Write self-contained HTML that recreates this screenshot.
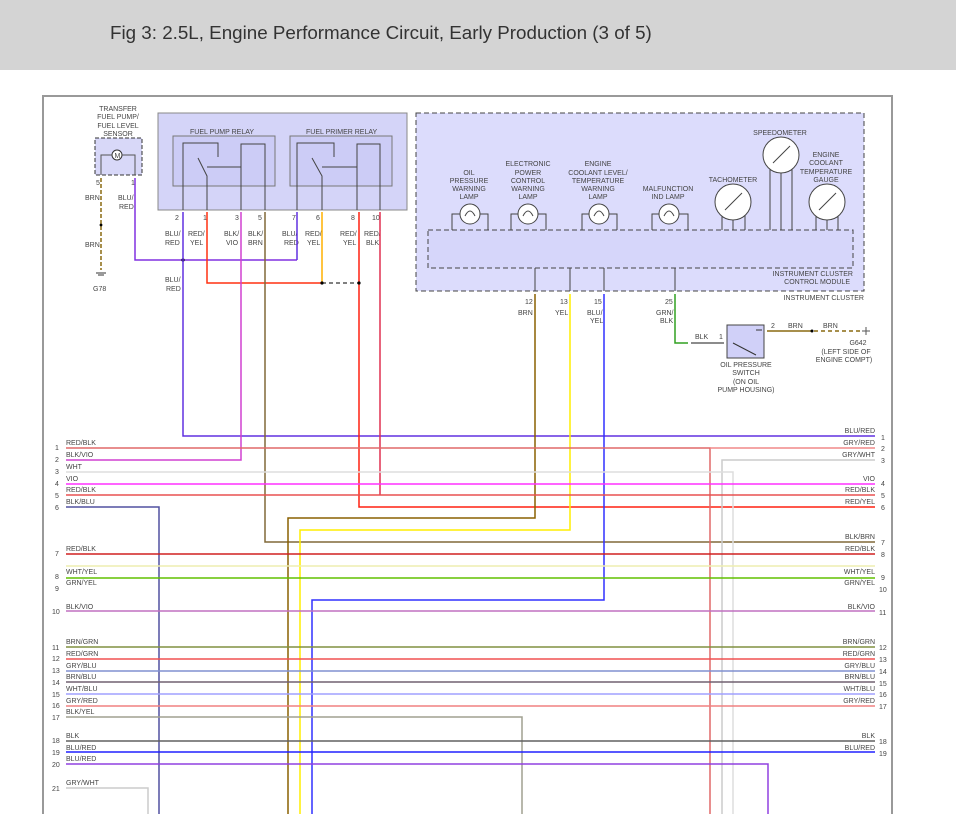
<!DOCTYPE html>
<html><head><meta charset="utf-8"><style>
body{margin:0;background:#fff;width:956px;height:814px;overflow:hidden;font-family:"Liberation Sans",sans-serif}
.hdr{position:absolute;left:0;top:0;width:956px;height:70px;background:#d4d4d4}
.hdr div{position:absolute;left:110px;top:22px;font-size:18.8px;color:#333}
svg{position:absolute;left:0;top:0}
text{font-family:"Liberation Sans",sans-serif;font-size:7px;fill:#444}
</style></head><body>
<div class="hdr"><div>Fig 3: 2.5L, Engine Performance Circuit, Early Production (3 of 5)</div></div>
<svg width="956" height="814" viewBox="0 0 956 814">
<path d="M43 814V96H892V814" fill="none" stroke="#999" stroke-width="2"/>
<text x="118" y="111" text-anchor="middle">TRANSFER</text>
<text x="118" y="119" text-anchor="middle">FUEL PUMP/</text>
<text x="118" y="128" text-anchor="middle">FUEL LEVEL</text>
<text x="118" y="136" text-anchor="middle">SENSOR</text>
<rect x="95" y="138" width="47" height="37" fill="#d8d8f8" stroke="#333" stroke-dasharray="4,2"/>
<circle cx="117" cy="155" r="5" fill="#fff" stroke="#333"/><text x="114.5" y="158">M</text>
<path d="M101 175V155H112M122 155H135V175" fill="none" stroke="#555"/>
<text x="96" y="185">5</text><text x="131" y="185">1</text>
<text x="85" y="200">BRN</text><text x="118" y="200">BLU/</text><text x="119" y="209">RED</text>
<text x="85" y="247">BRN</text><text x="93" y="291">G78</text>
<path d="M101 178V270" stroke="#8a6a10" stroke-width="1.5" stroke-dasharray="4,2"/>
<path d="M96 273H106M98 275H104" stroke="#333"/>
<path d="M135 178V260H297" fill="none" stroke="#8030e0" stroke-width="1.5"/>
<circle cx="183" cy="260" r="1.6" fill="#000"/><circle cx="101" cy="225" r="1.4" fill="#000"/>
<rect x="158" y="113" width="249" height="97" fill="#d4d4f8" stroke="#888"/>
<text x="190" y="134">FUEL PUMP RELAY</text><text x="306" y="134">FUEL PRIMER RELAY</text>
<rect x="173" y="136" width="102" height="50" fill="#ccccf6" stroke="#777"/>
<rect x="290" y="136" width="102" height="50" fill="#ccccf6" stroke="#777"/>
<g fill="none" stroke="#444">
<path d="M183 210V143H218V157M207 210V176L198 158M207 167H241M241 210V144H265V210M241 158V176"/>
<path d="M297 210V143H334V157M322 210V176L312 158M322 167H357M357 210V144H380V210M357 158V176"/>
</g>
<g font-size="7">
<text x="175" y="220">2</text><text x="203" y="220">1</text><text x="235" y="220">3</text><text x="258" y="220">5</text>
<text x="292" y="220">7</text><text x="316" y="220">6</text><text x="351" y="220">8</text><text x="372" y="220">10</text>
<text x="165" y="236">BLU/</text><text x="165" y="245">RED</text><text x="188" y="236">RED/</text><text x="190" y="245">YEL</text>
<text x="224" y="236">BLK/</text><text x="226" y="245">VIO</text><text x="248" y="236">BLK/</text><text x="248" y="245">BRN</text>
<text x="282" y="236">BLU/</text><text x="284" y="245">RED</text><text x="305" y="236">RED/</text><text x="307" y="245">YEL</text>
<text x="340" y="236">RED/</text><text x="343" y="245">YEL</text><text x="364" y="236">RED/</text><text x="366" y="245">BLK</text>
<text x="165" y="282">BLU/</text><text x="166" y="291">RED</text>
</g>
<rect x="416" y="113" width="448" height="178" fill="#dcdcfc" stroke="#444" stroke-dasharray="5,3"/>
<rect x="428" y="230" width="425" height="38" fill="#d6d6fa" stroke="#444" stroke-dasharray="5,3"/>
<g text-anchor="middle">
<text x="469" y="175">OIL</text><text x="469" y="183">PRESSURE</text><text x="469" y="191">WARNING</text><text x="469" y="199">LAMP</text>
<text x="528" y="166">ELECTRONIC</text><text x="528" y="175">POWER</text><text x="528" y="183">CONTROL</text><text x="528" y="191">WARNING</text><text x="528" y="199">LAMP</text>
<text x="598" y="166">ENGINE</text><text x="598" y="175">COOLANT LEVEL/</text><text x="598" y="183">TEMPERATURE</text><text x="598" y="191">WARNING</text><text x="598" y="199">LAMP</text>
<text x="668" y="191">MALFUNCTION</text><text x="668" y="199">IND LAMP</text>
<text x="733" y="182">TACHOMETER</text><text x="780" y="135">SPEEDOMETER</text>
<text x="826" y="157">ENGINE</text><text x="826" y="165">COOLANT</text><text x="826" y="174">TEMPERATURE</text><text x="826" y="182">GAUGE</text>
</g>
<g fill="#fff" stroke="#444">
<path d="M452 230V214H488V230M511 230V214H546V230M582 230V214H617V230M652 230V214H688V230" fill="none"/>
<circle cx="470" cy="214" r="10"/><circle cx="528" cy="214" r="10"/><circle cx="599" cy="214" r="10"/><circle cx="669" cy="214" r="10"/>
<path d="M465 216Q470 206 475 216M523 216Q528 206 533 216M594 216Q599 206 604 216M664 216Q669 206 674 216" fill="none"/>
<path d="M722 230V212M733 230V212M745 230V212M770 230V160M781 230V160M792 230V160M816 230V212M827 230V212M838 230V212" fill="none"/>
<circle cx="733" cy="202" r="18"/><circle cx="781" cy="155" r="18"/><circle cx="827" cy="202" r="18"/>
<path d="M725 210L742 193M773 163L790 146M819 210L836 193" fill="none"/>
<path d="M535 268V291M570 268V291M604 268V291M675 268V291" fill="none"/>
</g>
<text x="853" y="276" text-anchor="end">INSTRUMENT CLUSTER</text>
<text x="850" y="284" text-anchor="end">CONTROL MODULE</text>
<text x="864" y="300" text-anchor="end">INSTRUMENT CLUSTER</text>
<text x="525" y="304">12</text><text x="560" y="304">13</text><text x="594" y="304">15</text><text x="665" y="304">25</text>
<text x="518" y="315">BRN</text><text x="555" y="315">YEL</text><text x="587" y="315">BLU/</text><text x="590" y="323">YEL</text>
<text x="656" y="315">GRN/</text><text x="660" y="323">BLK</text>
<path d="M675 294V343H688" fill="none" stroke="#30a020" stroke-width="1.5"/>
<path d="M691 343H724" stroke="#666" stroke-width="1.5"/><text x="695" y="339">BLK</text><text x="719" y="339">1</text>
<rect x="727" y="325" width="37" height="33" fill="#d0d0f8" stroke="#444"/>
<path d="M733 343L756 355M756 330H762" stroke="#333"/>
<text x="746" y="367" text-anchor="middle">OIL PRESSURE</text><text x="746" y="375" text-anchor="middle">SWITCH</text>
<text x="746" y="384" text-anchor="middle">(ON OIL</text><text x="746" y="392" text-anchor="middle">PUMP HOUSING)</text>
<text x="771" y="328">2</text><text x="788" y="328">BRN</text><text x="823" y="328">BRN</text>
<path d="M767 331H811" stroke="#8a6a10" stroke-width="1.5"/><path d="M814 331H860" stroke="#8a6a10" stroke-width="1.5" stroke-dasharray="4,3"/>
<circle cx="812" cy="331" r="1.5" fill="#000"/><path d="M866 327V335M862 331H870" stroke="#555"/>
<text x="858" y="345" text-anchor="middle">G642</text><text x="846" y="354" text-anchor="middle">(LEFT SIDE OF</text><text x="844" y="362" text-anchor="middle">ENGINE COMPT)</text>
<g fill="none" stroke-width="1.5">
<path d="M183 212V436H875" stroke="#6030e0"/>
<path d="M207 212V283H322" stroke="#ff3010"/>
<path d="M322 212V283" stroke="#ffb000"/>
<path d="M241 212V460H66" stroke="#d040d0"/>
<path d="M265 212V542H875" stroke="#806838"/>
<path d="M297 212V260" stroke="#6030e0"/>
<path d="M359 212V507H875" stroke="#ff2010"/>
<path d="M380 212V495" stroke="#e03050"/>
<path d="M535 294V518H288V814" stroke="#8a6000"/>
<path d="M570 294V530H300V814" stroke="#ffee00"/>
<path d="M604 294V600H312V814" stroke="#3030ff"/>
</g>
<path d="M322 283H359" stroke="#000" stroke-dasharray="4,3"/>
<circle cx="322" cy="283" r="1.6"/><circle cx="359" cy="283" r="1.6"/>
<g fill="none" stroke-width="1.5">
<path d="M66 448H710V814" stroke="#e06868"/><path d="M710 448H875" stroke="#f08888"/>
<path d="M722 814V460H875" stroke="#ccc"/>
<path d="M66 472H733V814" stroke="#ddd"/>
<path d="M66 484H875" stroke="#ff30ff"/>
<path d="M66 495H875" stroke="#e85050"/>
<path d="M66 507H159V814" stroke="#5050a0"/>
<path d="M66 554H875" stroke="#d02020"/>
<path d="M66 566H875" stroke="#eeeeb0"/>
<path d="M66 578H875" stroke="#60c000"/>
<path d="M66 611H875" stroke="#c070c0"/>
<path d="M66 647H875" stroke="#809040"/>
<path d="M66 659H875" stroke="#f05050"/>
<path d="M66 671H875" stroke="#8090d0"/>
<path d="M66 682H875" stroke="#706070"/>
<path d="M66 694H875" stroke="#a0a0ff"/>
<path d="M66 706H875" stroke="#f08080"/>
<path d="M66 717H522V814" stroke="#a0a090"/>
<path d="M66 741H875" stroke="#606060"/>
<path d="M66 752H875" stroke="#2020ff"/>
<path d="M66 764H768V814" stroke="#9040e0"/>
<path d="M66 788H148V814" stroke="#ccc"/>
</g>
<g>
<text x="66" y="445">RED/BLK</text><text x="55" y="450">1</text>
<text x="66" y="457">BLK/VIO</text><text x="55" y="462">2</text>
<text x="66" y="469">WHT</text><text x="55" y="474">3</text>
<text x="66" y="481">VIO</text><text x="55" y="486">4</text>
<text x="66" y="492">RED/BLK</text><text x="55" y="498">5</text>
<text x="66" y="504">BLK/BLU</text><text x="55" y="510">6</text>
<text x="66" y="551">RED/BLK</text><text x="55" y="556">7</text>
<text x="66" y="574">WHT/YEL</text><text x="55" y="579">8</text>
<text x="66" y="585">GRN/YEL</text><text x="55" y="591">9</text>
<text x="66" y="609">BLK/VIO</text><text x="52" y="614">10</text>
<text x="66" y="644">BRN/GRN</text><text x="52" y="650">11</text>
<text x="66" y="656">RED/GRN</text><text x="52" y="661">12</text>
<text x="66" y="668">GRY/BLU</text><text x="52" y="673">13</text>
<text x="66" y="679">BRN/BLU</text><text x="52" y="685">14</text>
<text x="66" y="691">WHT/BLU</text><text x="52" y="697">15</text>
<text x="66" y="703">GRY/RED</text><text x="52" y="708">16</text>
<text x="66" y="714">BLK/YEL</text><text x="52" y="720">17</text>
<text x="66" y="738">BLK</text><text x="52" y="743">18</text>
<text x="66" y="750">BLU/RED</text><text x="52" y="755">19</text>
<text x="66" y="761">BLU/RED</text><text x="52" y="767">20</text>
<text x="66" y="785">GRY/WHT</text><text x="52" y="791">21</text>
</g>
<g text-anchor="end">
<text x="875" y="433">BLU/RED</text><text x="875" y="445">GRY/RED</text><text x="875" y="457">GRY/WHT</text>
<text x="875" y="481">VIO</text><text x="875" y="492">RED/BLK</text><text x="875" y="504">RED/YEL</text>
<text x="875" y="539">BLK/BRN</text><text x="875" y="551">RED/BLK</text><text x="875" y="574">WHT/YEL</text>
<text x="875" y="585">GRN/YEL</text><text x="875" y="609">BLK/VIO</text><text x="875" y="644">BRN/GRN</text>
<text x="875" y="656">RED/GRN</text><text x="875" y="668">GRY/BLU</text><text x="875" y="679">BRN/BLU</text>
<text x="875" y="691">WHT/BLU</text><text x="875" y="703">GRY/RED</text><text x="875" y="738">BLK</text>
<text x="875" y="750">BLU/RED</text>
</g>
<g>
<text x="881" y="440">1</text><text x="881" y="451">2</text><text x="881" y="463">3</text><text x="881" y="486">4</text>
<text x="881" y="498">5</text><text x="881" y="510">6</text><text x="881" y="545">7</text><text x="881" y="557">8</text>
<text x="881" y="580">9</text><text x="879" y="592">10</text><text x="879" y="615">11</text><text x="879" y="650">12</text>
<text x="879" y="662">13</text><text x="879" y="674">14</text><text x="879" y="686">15</text><text x="879" y="697">16</text>
<text x="879" y="709">17</text><text x="879" y="744">18</text><text x="879" y="756">19</text>
</g>
</svg>
</body></html>
